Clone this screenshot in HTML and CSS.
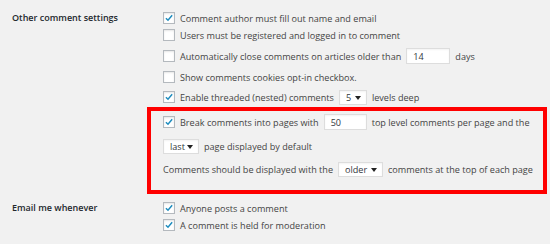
FILE: index.html
```html
<!DOCTYPE html>
<html>
<head>
<meta charset="utf-8">
<link rel="stylesheet" href="styles.css">
</head>
<body>
<div class="section">
  <div class="label">Other comment settings</div>
  <div class="field">
    <div class="row r1"><span class="cb on"><svg viewBox="0 0 12 12"><path d="M2.3 6.2 L4.8 8.6 L9.8 2.8" /></svg></span><span>Comment author must fill out name and email</span></div>
    <div class="row r2"><span class="cb"></span><span>Users must be registered and logged in to comment</span></div>
    <div class="row r3"><span class="cb"></span><span>Automatically close comments on articles older than</span><span class="input w44">14</span><span>days</span></div>
    <div class="row r4"><span class="cb"></span><span>Show comments cookies opt-in checkbox.</span></div>
    <div class="row r5"><span class="cb on"><svg viewBox="0 0 12 12"><path d="M2.3 6.2 L4.8 8.6 L9.8 2.8" /></svg></span><span>Enable threaded (nested) comments</span><span class="select w28">5<i class="arrow"></i></span><span>levels deep</span></div>
    <div class="highlight">
      <div class="row r6"><span class="cb on"><svg viewBox="0 0 12 12"><path d="M2.3 6.2 L4.8 8.6 L9.8 2.8" /></svg></span><span>Break comments into pages with</span><span class="input w43">50</span><span>top level comments per page and the</span></div>
      <div class="row r7"><span class="select w36 first">last<i class="arrow"></i></span><span>page displayed by default</span></div>
      <div class="row r8"><span>Comments should be displayed with the</span><span class="select w45">older<i class="arrow"></i></span><span>comments at the top of each page</span></div>
    </div>
  </div>
</div>
<div class="section s2">
  <div class="label">Email me whenever</div>
  <div class="field">
    <div class="row r9"><span class="cb on"><svg viewBox="0 0 12 12"><path d="M2.3 6.2 L4.8 8.6 L9.8 2.8" /></svg></span><span>Anyone posts a comment</span></div>
    <div class="row r10"><span class="cb on"><svg viewBox="0 0 12 12"><path d="M2.3 6.2 L4.8 8.6 L9.8 2.8" /></svg></span><span>A comment is held for moderation</span></div>
  </div>
</div>
</body>
</html>
```
FILE: styles.css
```css
html, body {
  margin: 0;
  padding: 0;
  background: #f1f1f1;
  width: 550px;
  height: 244px;
  overflow: hidden;
}
body {
  font-family: "Open Sans", "Liberation Sans", sans-serif;
  font-size: 9.1px;
  color: #444;
  padding-left: 12px;
  padding-top: 10px;
  box-sizing: border-box;
}
.section {
  display: grid;
  grid-template-columns: 135px 400px;
}
.label {
  font-weight: 600;
  color: #23282d;
  font-size: 9px;
  line-height: 16px;
}
.field {
  display: flex;
  flex-direction: column;
}
.row {
  display: flex;
  align-items: center;
  height: 16px;
  padding-left: 16px;
  white-space: nowrap;
}
.highlight .row { padding-left: 12px; }
.r2 { margin-top: 1px; }
.r3 { margin-top: 5px; }
.r4 { margin-top: 5px; }
.r5 { margin-top: 4px; }
.highlight {
  margin-top: 2px;
  border: 4px solid #ff0000;
  padding: 3px 0 13px 0;
  width: 400px;
  box-sizing: border-box;
}
.r7 { margin-top: 8px; }
.r8 { margin-top: 7px; }
.s2 { margin-top: 6px; }
.r10 { margin-top: 1px; }
.cb {
  width: 10px;
  height: 10px;
  border: 1px solid #b4b9be;
  background: #fff;
  box-shadow: inset 0 1px 2px rgba(0,0,0,0.1);
  margin-right: 5px;
  flex: none;
  display: flex;
}
.cb svg { width: 10px; height: 10px; }
.cb svg path {
  fill: none;
  stroke: #1e8cbe;
  stroke-width: 1.8;
}
.input, .select {
  background: #fff;
  border: 1px solid #ddd;
  box-shadow: inset 0 1px 2px rgba(0,0,0,0.05);
  height: 16px;
  box-sizing: border-box;
  display: flex;
  align-items: center;
  padding-left: 6px;
  color: #32373c;
  position: relative;
  flex: none;
  margin: 0 5px;
}
.select { height: 15px; }
.first { margin-left: 0; }
.w44 { width: 44px; }
.w43 { width: 43px; }
.w28 { width: 28px; }
.w36 { width: 36px; }
.w45 { width: 45px; }
.arrow {
  position: absolute;
  right: 5px;
  top: 5px;
  width: 0;
  height: 0;
  border-left: 3px solid transparent;
  border-right: 3px solid transparent;
  border-top: 4px solid #222;
}
```
